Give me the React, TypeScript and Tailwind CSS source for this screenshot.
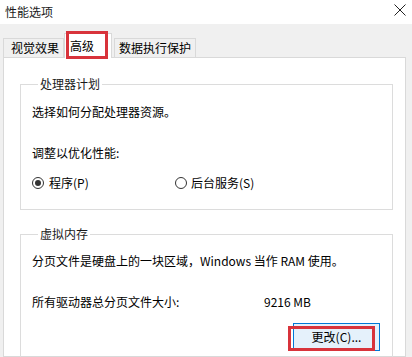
import React from 'react'

const font = "font-['Noto_Sans_CJK_SC','Noto_Sans',sans-serif]"

function Radio({ checked }: { checked?: boolean }) {
  return (
    <span className="w-[12px] h-[12px] rounded-full border border-[#333333] bg-white flex items-center justify-center">
      {checked && <span className="w-[6px] h-[6px] rounded-full bg-[#333333]" />}
    </span>
  )
}

function Group({ title, children, className = '' }: { title: string; children: React.ReactNode; className?: string }) {
  return (
    <fieldset className={`border border-[#dcdcdc] ${className}`}>
      <legend className="ml-[6px] px-[2px] leading-[16px] text-[#1a1a1a]">{title}</legend>
      {children}
    </fieldset>
  )
}

export default function App() {
  return (
    <div className={`w-[412px] h-[357px] overflow-hidden bg-[#f0f0f0] text-[12px] text-black ${font}`}>
      {/* title bar */}
      <div className="h-[24px] bg-white flex items-center justify-between pl-[5px] pr-[6px]">
        <span className="leading-[16px] text-[#1a1a1a]">性能选项</span>
        <svg width="12" height="12" viewBox="0 0 12 12" className="mb-[4px]">
          <path d="M0.5 0.5 L11.5 11.5 M11.5 0.5 L0.5 11.5" stroke="#222" strokeWidth="1" />
        </svg>
      </div>

      <div className="pl-[3px] pt-[6px]">
        {/* tabs */}
        <div className="flex items-end h-[27px]">
          <div className="h-[19px] w-[61px] border border-b-0 border-[#d9d9d9] bg-[#f0f0f0] flex items-center pl-[7px] leading-[16px]">
            视觉效果
          </div>
          <div className="relative h-[25px] w-[48px] -mb-px bg-white border border-b-0 border-[#d9d9d9] flex items-center pl-[5px] leading-[16px] z-10">
            高级
            <span className="absolute left-[1px] top-[-3px] w-[42px] h-[28px] border-[3px] border-[#d8333b]" />
          </div>
          <div className="h-[19px] w-[82px] ml-[2px] border border-b-0 border-[#d9d9d9] bg-[#f0f0f0] flex items-center pl-[4px] leading-[16px]">
            数据执行保护
          </div>
        </div>

        {/* panel */}
        <div className="w-[403px] h-[300px] bg-white border border-[#d9d9d9] pl-[16px] pr-[12px] pt-[18px]">
          <Group title="处理器计划" className="pl-[11px] pb-[18px]">
            <div className="mt-[12px] leading-[16px]">选择如何分配处理器资源。</div>
            <div className="mt-[25px] leading-[16px]">调整以优化性能:</div>
            <div className="mt-[14px] flex items-center leading-[16px]">
              <div className="w-[143px] flex items-center gap-[5px]">
                <Radio checked />
                <span>程序(P)</span>
              </div>
              <div className="flex items-center gap-[4px]">
                <Radio />
                <span>后台服务(S)</span>
              </div>
            </div>
          </Group>

          <Group title="虚拟内存" className="mt-[16px] pl-[11px] pb-[20px]">
            <div className="mt-[11px] leading-[16px]">分页文件是硬盘上的一块区域，Windows 当作 RAM 使用。</div>
            <div className="mt-[25px] flex leading-[16px]">
              <span className="w-[232px]">所有驱动器总分页文件大小:</span>
              <span>9216 MB</span>
            </div>
            <div className="mt-[13px] flex justify-end pr-[12px]">
              <button className="relative w-[87px] h-[28px] border border-[#0078d7] bg-[#e5f1fb] leading-[16px] text-black">
                更改(C)...
                <span className="absolute left-[-6px] top-[2px] w-[87px] h-[25px] border-[3px] border-[#d8333b]" />
              </button>
            </div>
          </Group>
        </div>
      </div>
    </div>
  )
}
